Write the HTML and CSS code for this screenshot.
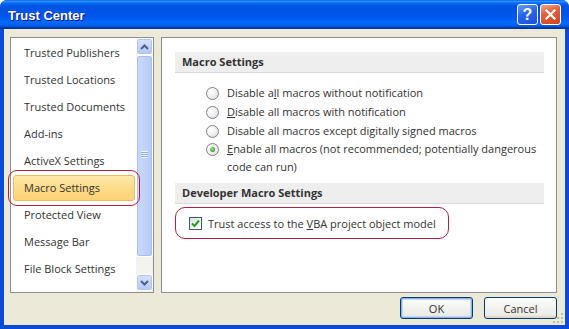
FILE: index.html
```html
<!DOCTYPE html>
<html>
<head>
    <meta charset="UTF-8">
    <title>Trust Center</title>
    <link rel="stylesheet" href="styles.css">
</head>

<body>
    <div class="window">
        <div class="titlebar">
            <span class="title">Trust Center</span>
            <span class="tb-btn help">?</span>
            <span class="tb-btn close">
                <svg width="13" height="13" viewBox="0 0 13 13">
                    <path d="M2.5 2.5 L10.5 10.5 M10.5 2.5 L2.5 10.5" stroke="#fff" stroke-width="2.2" stroke-linecap="square"/>
                </svg>
            </span>
        </div>
        <div class="client">
            <div class="main">
                <div class="nav">
                    <ul class="nav-list">
                        <li>Trusted Publishers</li>
                        <li>Trusted Locations</li>
                        <li>Trusted Documents</li>
                        <li>Add-ins</li>
                        <li>ActiveX Settings</li>
                        <li class="selected">Macro Settings<span class="mark"></span></li>
                        <li>Protected View</li>
                        <li>Message Bar</li>
                        <li>File Block Settings</li>
                    </ul>
                    <div class="scrollbar">
                        <div class="sb-btn">
                            <svg width="9" height="6" viewBox="0 0 9 6"><path d="M1 5 L4.5 1.5 L8 5" fill="none" stroke="#4d6185" stroke-width="2"/></svg>
                        </div>
                        <div class="sb-thumb">
                            <span class="grip"></span>
                        </div>
                        <div class="sb-track"></div>
                        <div class="sb-btn">
                            <svg width="9" height="6" viewBox="0 0 9 6"><path d="M1 1 L4.5 4.5 L8 1" fill="none" stroke="#4d6185" stroke-width="2"/></svg>
                        </div>
                    </div>
                </div>
                <div class="pane">
                    <div class="section-head">Macro Settings</div>
                    <div class="options">
                        <div class="opt"><span class="radio"></span><span>Disable a<u>l</u>l macros without notification</span></div>
                        <div class="opt"><span class="radio"></span><span><u>D</u>isable all macros with notification</span></div>
                        <div class="opt"><span class="radio"></span><span>Disable all macros except di<u>g</u>itally signed macros</span></div>
                        <div class="opt"><span class="radio on"></span><span><u>E</u>nable all macros (not recommended; potentially dangerous<br>code can run)</span></div>
                    </div>
                    <div class="section-head">Developer Macro Settings</div>
                    <div class="check-row">
                        <span class="check">
                            <svg width="11" height="11" viewBox="0 0 11 11"><path d="M2 5.5 L4.5 8 L9 2.5" fill="none" stroke="#21a121" stroke-width="2"/></svg>
                        </span>
                        <span>Trust access to the <u>V</u>BA project object model</span>
                    </div>
                </div>
            </div>
            <div class="footer">
                <button class="btn default">OK</button>
                <button class="btn">Cancel</button>
            </div>
            <svg class="size-grip" width="11" height="11" viewBox="0 0 11 11">
                <g fill="#c3bfae">
                    <rect x="8" y="0" width="2" height="2"/>
                    <rect x="4" y="4" width="2" height="2"/><rect x="8" y="4" width="2" height="2"/>
                    <rect x="0" y="8" width="2" height="2"/><rect x="4" y="8" width="2" height="2"/><rect x="8" y="8" width="2" height="2"/>
                </g>
            </svg>
        </div>
    </div>
</body>
</html>
```

FILE: styles.css
```css
html, body {
    margin: 0;
    padding: 0;
    background: #ffffff;
}

body {
    font-family: "Open Sans", "Noto Sans", sans-serif;
    font-size: 11px;
    color: #333333;
}

.window {
    width: 569px;
    height: 329px;
    display: flex;
    flex-direction: column;
    background: #0a4ad9;
    border-radius: 7px 7px 0 0;
    box-sizing: border-box;
}

/* title bar, xp luna */
.titlebar {
    height: 29px;
    flex: none;
    display: flex;
    align-items: center;
    padding: 0 8px 0 8px;
    border-radius: 7px 7px 0 0;
    background: linear-gradient(180deg, #0058ee 0%, #3593ff 4%, #288eff 6%, #127dff 8%, #036ffc 10%, #0262ee 14%, #0057e5 20%, #0054e3 24%, #0055eb 56%, #005bf5 66%, #026afe 76%, #0062ef 86%, #0052d6 92%, #0040ab 94%, #003092 100%);
}

.title {
    flex: 1;
    color: #ffffff;
    font-family: "Liberation Sans", sans-serif;
    font-weight: bold;
    font-size: 13px;
    text-shadow: 1px 1px #0f1089;
    padding-top: 1px;
}

.tb-btn {
    width: 21px;
    height: 21px;
    box-sizing: border-box;
    border: 1px solid #ffffff;
    border-radius: 3px;
    display: flex;
    align-items: center;
    justify-content: center;
    color: #ffffff;
    margin-left: 2px;
}

.help {
    background: linear-gradient(160deg, #6a9cf8 0%, #2765ec 45%, #1e50d6 100%);
    font-family: "Liberation Sans", sans-serif;
    font-weight: bold;
    font-size: 16px;
}

.close {
    background: linear-gradient(160deg, #f1a68b 0%, #e2613a 40%, #d0451c 100%);
}

/* dialog body */
.client {
    flex: 1;
    margin: 0 4px 4px 4px;
    background: #ece9d8;
    display: flex;
    flex-direction: column;
    padding: 8px 8px 0 6px;
    position: relative;
}

.main {
    height: 256px;
    display: flex;
    gap: 7px;
}

.nav {
    width: 144px;
    box-sizing: border-box;
    border: 1px solid #8e8f8f;
    background: #ffffff;
    display: flex;
}

.nav-list {
    list-style: none;
    margin: 0;
    padding: 2px 1px 0 2px;
    flex: 1;
}

.nav-list li {
    height: 26px;
    line-height: 26px;
    margin-bottom: 1px;
    padding-left: 11px;
    box-sizing: border-box;
    white-space: nowrap;
    position: relative;
}

.nav-list li.selected {
    background: linear-gradient(180deg, #fee9ab 0%, #fddc8a 50%, #fcd274 100%);
    border: 1px solid #e5bd66;
    border-radius: 3px;
    padding-left: 10px;
    line-height: 24px;
}

.mark {
    position: absolute;
    left: -6px;
    top: -6px;
    right: -6px;
    bottom: -6px;
    border: 1px solid #b02240;
    border-radius: 9px;
    z-index: 2;
}

/* scroll bar */
.scrollbar {
    width: 17px;
    background: #f4f3ee;
    display: flex;
    flex-direction: column;
    padding-bottom: 1px;
}

.sb-btn {
    height: 17px;
    box-sizing: border-box;
    border: 1px solid #ffffff;
    border-radius: 3px;
    background: linear-gradient(180deg, #d6e2fd 0%, #c3d4fb 60%, #b4c8f6 100%);
    display: flex;
    align-items: center;
    justify-content: center;
    box-shadow: inset 0 0 0 1px #b0c4f0;
}

.sb-thumb {
    height: 202px;
    box-sizing: border-box;
    border: 1px solid #ffffff;
    border-radius: 3px;
    background: linear-gradient(90deg, #c9d8fc 0%, #c1d3fb 50%, #b8cbf8 100%);
    box-shadow: inset 0 0 0 1px #a9bef3;
    display: flex;
    align-items: center;
    justify-content: center;
}

.grip {
    width: 7px;
    height: 7px;
    margin-bottom: 3px;
    background: repeating-linear-gradient(180deg, #eef3fe 0px, #eef3fe 1px, #8faae8 1px, #8faae8 2px);
}

.sb-track {
    flex: 1;
}

/* right pane */
.pane {
    width: 396px;
    box-sizing: border-box;
    border: 1px solid #8e8f8f;
    background: #ffffff;
    padding: 14px 12px 0 13px;
}

.section-head {
    height: 21px;
    line-height: 20px;
    box-sizing: border-box;
    background: #eeeeee;
    border-bottom: 1px solid #d9d9d9;
    padding-left: 7px;
    font-weight: bold;
    color: #333333;
}

.options {
    padding: 11px 0 6px 31px;
}

.opt {
    display: flex;
    align-items: flex-start;
    line-height: 18px;
    margin-bottom: 1px;
}

.opt:last-child {
    margin-top: -1px;
}

.radio {
    width: 13px;
    height: 13px;
    flex: none;
    box-sizing: border-box;
    border: 1px solid #7e848c;
    border-radius: 50%;
    background: radial-gradient(circle at 35% 35%, #ffffff 0%, #f3f3f3 40%, #d4d6d9 100%);
    margin: 3px 8px 0 0;
    position: relative;
}

.radio.on::after {
    content: "";
    position: absolute;
    left: 3px;
    top: 3px;
    width: 5px;
    height: 5px;
    border-radius: 50%;
    background: radial-gradient(circle at 40% 40%, #9fe08f 0%, #3da33a 70%, #2b8a2a 100%);
}

.check-row {
    display: inline-flex;
    align-items: center;
    height: 32px;
    box-sizing: border-box;
    width: 274px;
    margin-top: 3px;
    padding-left: 13px;
    border: 1px solid #b02240;
    border-radius: 10px;
}

.check {
    width: 13px;
    height: 13px;
    box-sizing: border-box;
    border: 1px solid #3c5a78;
    background: linear-gradient(135deg, #dcdcd7 0%, #f6f6f4 60%, #ffffff 100%);
    display: flex;
    align-items: center;
    justify-content: center;
    margin-right: 6px;
}

/* buttons */
.footer {
    display: flex;
    justify-content: flex-end;
    gap: 11px;
    padding-top: 4px;
}

.btn {
    width: 73px;
    height: 22px;
    border: 1px solid #003c74;
    border-radius: 3px;
    background: linear-gradient(180deg, #ffffff 0%, #f4f4f0 40%, #ecebe6 85%, #d6d0c5 100%);
    font-family: "Open Sans", sans-serif;
    font-size: 11px;
    color: #333333;
    padding: 0;
}

.btn.default {
    box-shadow: inset 0 0 0 1px #8db2e3, inset 0 0 0 2px #c4d9f6;
}

.size-grip {
    position: absolute;
    right: 1px;
    bottom: 1px;
}
```
